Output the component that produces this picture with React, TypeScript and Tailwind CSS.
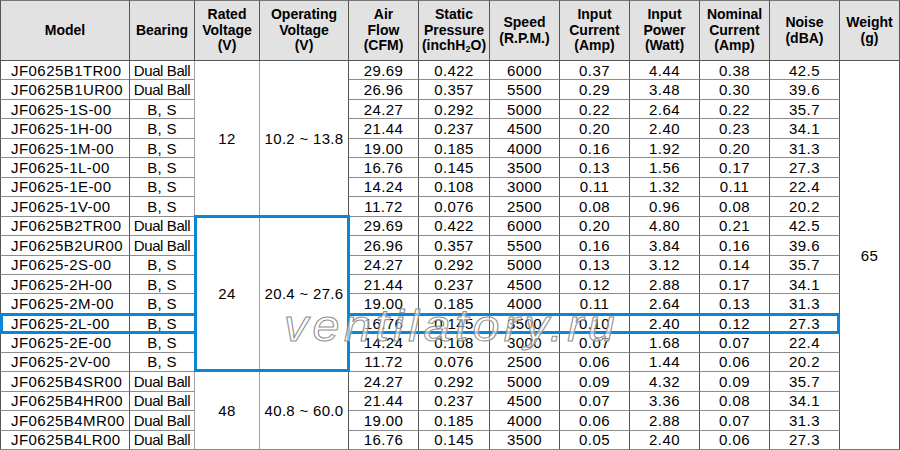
import React from "react";

const rows: string[][] = [
  ["JF0625B1TR00", "Dual Ball", "29.69", "0.422", "6000", "0.37", "4.44", "0.38", "42.5"],
  ["JF0625B1UR00", "Dual Ball", "26.96", "0.357", "5500", "0.29", "3.48", "0.30", "39.6"],
  ["JF0625-1S-00", "B, S", "24.27", "0.292", "5000", "0.22", "2.64", "0.22", "35.7"],
  ["JF0625-1H-00", "B, S", "21.44", "0.237", "4500", "0.20", "2.40", "0.23", "34.1"],
  ["JF0625-1M-00", "B, S", "19.00", "0.185", "4000", "0.16", "1.92", "0.20", "31.3"],
  ["JF0625-1L-00", "B, S", "16.76", "0.145", "3500", "0.13", "1.56", "0.17", "27.3"],
  ["JF0625-1E-00", "B, S", "14.24", "0.108", "3000", "0.11", "1.32", "0.11", "22.4"],
  ["JF0625-1V-00", "B, S", "11.72", "0.076", "2500", "0.08", "0.96", "0.08", "20.2"],
  ["JF0625B2TR00", "Dual Ball", "29.69", "0.422", "6000", "0.20", "4.80", "0.21", "42.5"],
  ["JF0625B2UR00", "Dual Ball", "26.96", "0.357", "5500", "0.16", "3.84", "0.16", "39.6"],
  ["JF0625-2S-00", "B, S", "24.27", "0.292", "5000", "0.13", "3.12", "0.14", "35.7"],
  ["JF0625-2H-00", "B, S", "21.44", "0.237", "4500", "0.12", "2.88", "0.17", "34.1"],
  ["JF0625-2M-00", "B, S", "19.00", "0.185", "4000", "0.11", "2.64", "0.13", "31.3"],
  ["JF0625-2L-00", "B, S", "16.76", "0.145", "3500", "0.10", "2.40", "0.12", "27.3"],
  ["JF0625-2E-00", "B, S", "14.24", "0.108", "3000", "0.07", "1.68", "0.07", "22.4"],
  ["JF0625-2V-00", "B, S", "11.72", "0.076", "2500", "0.06", "1.44", "0.06", "20.2"],
  ["JF0625B4SR00", "Dual Ball", "24.27", "0.292", "5000", "0.09", "4.32", "0.09", "35.7"],
  ["JF0625B4HR00", "Dual Ball", "21.44", "0.237", "4500", "0.07", "3.36", "0.08", "34.1"],
  ["JF0625B4MR00", "Dual Ball", "19.00", "0.185", "4000", "0.06", "2.88", "0.07", "31.3"],
  ["JF0625B4LR00", "Dual Ball", "16.76", "0.145", "3500", "0.05", "2.40", "0.06", "27.3"],
];

const hdr =
  "flex items-center justify-center text-center bg-[#e2e2e2] border-t border-t-[#777] border-r border-r-[#555] border-b border-b-[#555] text-[14px] font-bold leading-[15.5px] text-black";

const cell =
  "flex items-center justify-center border-r border-r-[#555] border-b border-b-[#8c8c8c] text-[15px] leading-none text-black whitespace-nowrap";

function Header() {
  return (
    <>
      <div className={hdr + " border-l border-l-[#555]"}>Model</div>
      <div className={hdr}>Bearing</div>
      <div className={hdr}>
        Rated
        <br />
        Voltage
        <br />
        (V)
      </div>
      <div className={hdr}>
        Operating
        <br />
        Voltage
        <br />
        (V)
      </div>
      <div className={hdr}>
        Air
        <br />
        Flow
        <br />
        (CFM)
      </div>
      <div className={hdr}>
        <span>
          Static
          <br />
          Pressure
          <br />
          (inchH<sub className="text-[9px] align-baseline relative top-[2px]">2</sub>O)
        </span>
      </div>
      <div className={hdr}>
        Speed
        <br />
        (R.P.M.)
      </div>
      <div className={hdr}>
        Input
        <br />
        Current
        <br />
        (Amp)
      </div>
      <div className={hdr}>
        Input
        <br />
        Power
        <br />
        (Watt)
      </div>
      <div className={hdr}>
        Nominal
        <br />
        Current
        <br />
        (Amp)
      </div>
      <div className={hdr}>
        Noise
        <br />
        (dBA)
      </div>
      <div className={hdr}>
        Weight
        <br />
        (g)
      </div>
    </>
  );
}

const groups: Record<number, { span: string; rated: string; op: string }> = {
  0: { span: "row-span-8", rated: "12", op: "10.2 ~ 13.8" },
  8: { span: "row-span-8", rated: "24", op: "20.4 ~ 27.6" },
  16: { span: "row-span-4", rated: "48", op: "40.8 ~ 60.0" },
};

export default function App() {
  return (
    <div className="relative w-[900px] h-[450px] bg-white overflow-hidden font-['Liberation_Sans',Arial,sans-serif]">
      <div className="grid w-[900px] h-[450px] grid-cols-[130px_65px_65px_89px_70px_71px_70px_70px_70px_70px_70px_60px] grid-rows-[61px_repeat(20,minmax(0,1fr))]">
        <Header />
        {rows.map((r, i) => {
          const g = groups[i];
          return (
            <React.Fragment key={i}>
              <div className={cell + " justify-start pl-[10px] border-l border-l-[#555] tracking-[0.45px]"}>
                {r[0]}
              </div>
              <div
                className={
                  cell +
                  " border-r-[#a0a0a0] " +
                  (r[1] === "Dual Ball" ? "tracking-[-0.4px]" : "tracking-[0.3px]")
                }
              >
                {r[1]}
              </div>
              {g && (
                <>
                  <div className={cell + " " + g.span + " border-r-[#a0a0a0] tracking-[0.3px]"}>{g.rated}</div>
                  <div className={cell + " " + g.span + " tracking-[0.3px]"}>{g.op}</div>
                </>
              )}
              {r.slice(2).map((v, j) => (
                <div key={j} className={cell + " tracking-[0.4px]"}>
                  {v}
                </div>
              ))}
              {i === 0 && (
                <div className={cell + " row-span-20 border-b-[#777] tracking-[0.3px]"}>65</div>
              )}
            </React.Fragment>
          );
        })}
      </div>

      {/* highlight boxes */}
      <div className="absolute left-[194px] top-[215px] w-[156px] h-[157px] border-[3px] border-[#0a86d6] pointer-events-none" />
      <div className="absolute left-0 top-[313px] w-[196px] h-[21px] border-l-[3px] border-t-[3px] border-b-[3px] border-[#0a86d6] pointer-events-none" />
      <div className="absolute left-[348px] top-[313px] w-[492px] h-[21px] border-r-[3px] border-t-[3px] border-b-[3px] border-[#0a86d6] pointer-events-none" />

      {/* watermark */}
      <div className="absolute left-[284px] top-[304px] origin-left scale-x-110 text-[44px] leading-none italic tracking-[4px] text-white/55 [-webkit-text-stroke:1px_#8f8f8f] pointer-events-none whitespace-nowrap font-['Liberation_Sans',Arial,sans-serif]">
        ventilatory.ru
      </div>
    </div>
  );
}
